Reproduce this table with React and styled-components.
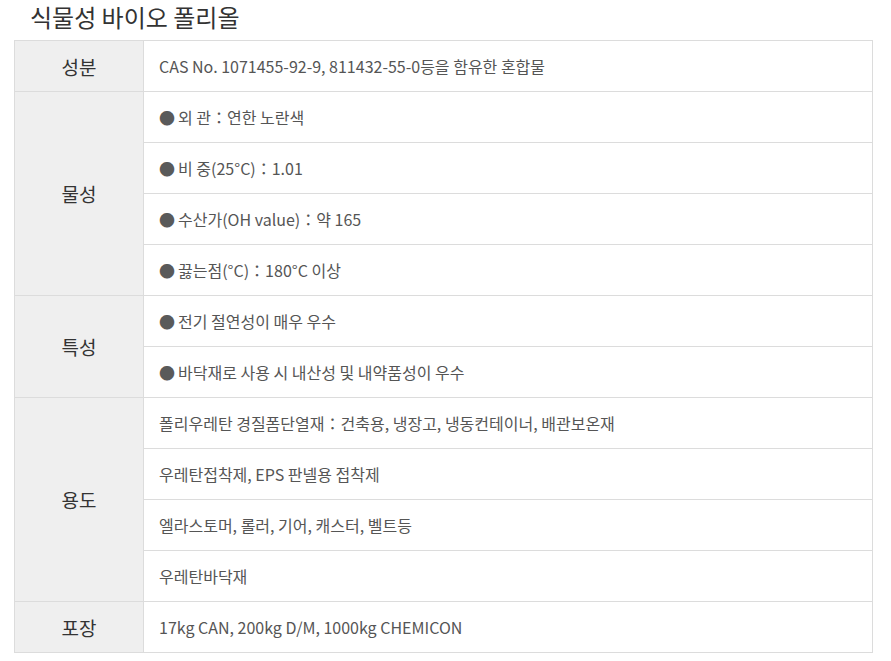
import React from "react";
import styled, { createGlobalStyle } from "styled-components";

const Global = createGlobalStyle`
  html, body { margin: 0; padding: 0; background: #fff; }
  body { font-family: "Noto Sans CJK KR", "Noto Sans", sans-serif; }
`;

const Page = styled.div`
  padding: 0 18px 0 14px;
`;

const Title = styled.h3`
  margin: 0;
  padding: 0 0 0 16px;
  height: 40px;
  line-height: 34px;
  font-size: 24px;
  font-weight: 400;
  color: #333;
`;

const Table = styled.table`
  width: 859px;
  border-collapse: collapse;
  border: 1px solid #dcdcdc;
`;

const Head = styled.th`
  width: 128px;
  padding: 0;
  background: #efefef;
  border: 1px solid #dcdcdc;
  font-size: 19px;
  font-weight: 400;
  color: #333;
  text-align: center;
  vertical-align: middle;
`;

const Cell = styled.td`
  height: 50px;
  padding: 0 15px;
  border: 1px solid #dcdcdc;
  font-size: 16px;
  color: #555;
  text-align: left;
  vertical-align: middle;
`;

const Dot = styled.span`
  color: #5a5a5a;
  margin-right: 3px;
`;

const groups = [
  { head: "성분", items: [{ t: "CAS No. 1071455-92-9, 811432-55-0등을 함유한 혼합물" }] },
  {
    head: "물성",
    items: [
      { t: "외 관：연한 노란색", dot: true },
      { t: "비 중(25°C)：1.01", dot: true },
      { t: "수산가(OH value)：약 165", dot: true },
      { t: "끓는점(°C)：180°C 이상", dot: true },
    ],
  },
  {
    head: "특성",
    items: [
      { t: "전기 절연성이 매우 우수", dot: true },
      { t: "바닥재로 사용 시 내산성 및 내약품성이 우수", dot: true },
    ],
  },
  {
    head: "용도",
    items: [
      { t: "폴리우레탄 경질폼단열재：건축용, 냉장고, 냉동컨테이너, 배관보온재" },
      { t: "우레탄접착제, EPS 판넬용 접착제" },
      { t: "엘라스토머, 롤러, 기어, 캐스터, 벨트등" },
      { t: "우레탄바닥재" },
    ],
  },
  { head: "포장", items: [{ t: "17kg CAN, 200kg D/M, 1000kg CHEMICON" }] },
];

export default function App() {
  return (
    <Page>
      <Global />
      <Title>식물성 바이오 폴리올</Title>
      <Table>
        <tbody>
          {groups.map((g) =>
            g.items.map((it, i) => (
              <tr key={g.head + i}>
                {i === 0 && <Head rowSpan={g.items.length}>{g.head}</Head>}
                <Cell>
                  {it.dot && <Dot>●</Dot>}
                  {it.t}
                </Cell>
              </tr>
            ))
          )}
        </tbody>
      </Table>
    </Page>
  );
}
